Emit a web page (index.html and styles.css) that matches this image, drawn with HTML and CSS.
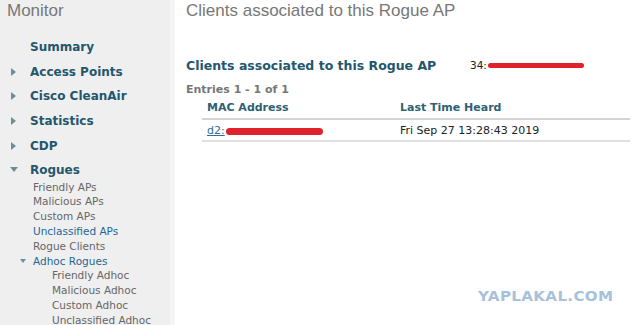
FILE: index.html
```html
<!DOCTYPE html>
<html lang="en">
<head>
  <meta charset="UTF-8" />
  <title>Monitor - Rogue Clients</title>
  <link rel="stylesheet" href="styles.css">
</head>
<body>
  <div class="page">
    <div class="sidebar">
      <div class="sidebar-title">Monitor</div>
      <ul class="menu">
        <li class="menu-item"><span class="arrow none"></span>Summary</li>
        <li class="menu-item"><span class="arrow right"></span>Access Points</li>
        <li class="menu-item"><span class="arrow right"></span>Cisco CleanAir</li>
        <li class="menu-item"><span class="arrow right"></span>Statistics</li>
        <li class="menu-item"><span class="arrow right"></span>CDP</li>
        <li class="menu-item"><span class="arrow down"></span>Rogues</li>
      </ul>
      <ul class="submenu">
        <li>Friendly APs</li>
        <li>Malicious APs</li>
        <li>Custom APs</li>
        <li class="active">Unclassified APs</li>
        <li>Rogue Clients</li>
        <li class="active group"><span class="arrow small-down"></span>Adhoc Rogues</li>
        <li class="nested">Friendly Adhoc</li>
        <li class="nested">Malicious Adhoc</li>
        <li class="nested">Custom Adhoc</li>
        <li class="nested">Unclassified Adhoc</li>
      </ul>
    </div>

    <div class="main">
      <div class="page-title">Clients associated to this Rogue AP</div>
      <div class="section-head">
        <span class="section-title">Clients associated to this Rogue AP</span>
        <span class="mac">34:<span class="redact wide"></span></span>
      </div>
      <div class="entries">Entries 1 - 1 of 1</div>
      <table class="clients">
        <thead>
          <tr>
            <th class="col-mac">MAC Address</th>
            <th>Last Time Heard</th>
          </tr>
        </thead>
        <tbody>
          <tr>
            <td class="col-mac"><a href="#">d2:</a><span class="redact short"></span></td>
            <td>Fri Sep 27 13:28:43 2019</td>
          </tr>
        </tbody>
      </table>
    </div>
  </div>
  <div class="watermark">YAPLAKAL.COM</div>
</body>
</html>
```

FILE: styles.css
```css
body {
  margin: 0;
  background: #fff;
  font-family: "DejaVu Sans", Verdana, sans-serif;
  overflow: hidden;
}
.page {
  display: flex;
  height: 325px;
  overflow: hidden;
}
.sidebar {
  width: 170px;
  background: #efefef;
  border-right: 5px solid #f4f4f4;
  flex-shrink: 0;
}
.sidebar-title {
  font-family: "Liberation Sans", Arial, sans-serif;
  font-size: 17px;
  color: #777;
  padding: 1px 0 0 7px;
  height: 34px;
}
ul {
  list-style: none;
  margin: 0;
  padding: 0;
}
.menu-item {
  display: flex;
  align-items: center;
  height: 24.6px;
  font-size: 12px;
  font-weight: bold;
  color: #24566d;
  padding-left: 11px;
}
.arrow {
  display: inline-block;
  width: 19px;
  height: 8px;
  position: relative;
}
.arrow.right::before {
  content: "";
  position: absolute;
  left: 0;
  top: 0;
  border-left: 5px solid #6a9094;
  border-top: 4px solid transparent;
  border-bottom: 4px solid transparent;
}
.arrow.down::before {
  content: "";
  position: absolute;
  left: -1px;
  top: 1px;
  border-top: 5px solid #6a9094;
  border-left: 4px solid transparent;
  border-right: 4px solid transparent;
}
.submenu {
  margin-top: -3px;
}
.submenu li {
  font-size: 10.5px;
  color: #666;
  line-height: 14.8px;
  padding-left: 33px;
  white-space: nowrap;
}
.submenu li.active {
  color: #1f6794;
}
.submenu li.group {
  padding-left: 20px;
}
.arrow.small-down {
  width: 13px;
  height: 6px;
}
.arrow.small-down::before {
  content: "";
  position: absolute;
  left: 0;
  top: 0;
  border-top: 4px solid #6a9094;
  border-left: 3px solid transparent;
  border-right: 3px solid transparent;
}
.submenu li.nested {
  padding-left: 52px;
}
.main {
  flex: 1;
  padding-left: 11px;
}
.page-title {
  font-family: "Liberation Sans", Arial, sans-serif;
  font-size: 17px;
  color: #777;
  padding-top: 1px;
  height: 49px;
}
.section-head {
  display: flex;
  align-items: center;
  height: 30px;
}
.section-title {
  width: 284px;
  font-size: 12.5px;
  font-weight: bold;
  color: #24566d;
}
.mac {
  font-size: 10.5px;
  color: #222;
  display: flex;
  align-items: center;
}
.redact {
  display: inline-block;
  height: 5px;
  background: #e0222c;
  border-radius: 3px;
}
.redact.wide {
  width: 96px;
  margin-left: 1px;
}
.redact.short {
  width: 97px;
  height: 7px;
  margin-left: 1px;
  vertical-align: middle;
  border-radius: 4px;
}
.entries {
  font-size: 11px;
  font-weight: bold;
  color: #777;
  margin-top: 3px;
  margin-bottom: 2px;
}
.clients {
  border-collapse: separate;
  border-spacing: 0;
  margin-left: 16px;
  width: 428px;
  font-size: 11px;
}
.clients th {
  text-align: left;
  font-weight: bold;
  color: #2f5f73;
  padding: 3px 5px 4px 5px;
  border-bottom: 2px solid #d4d4d4;
}
.clients td {
  color: #222;
  padding: 4px 5px 3px 5px;
  border-bottom: 2px solid #e0e0e0;
}
.clients .col-mac {
  width: 183px;
}
.clients a {
  color: #2b6ea0;
}
.watermark {
  position: absolute;
  left: 478px;
  top: 288px;
  font-family: "DejaVu Sans", sans-serif;
  font-weight: bold;
  font-size: 13.5px;
  letter-spacing: 0.3px;
  color: #a7c2d8;
  transform: scaleX(1.12);
  transform-origin: left center;
}
```
